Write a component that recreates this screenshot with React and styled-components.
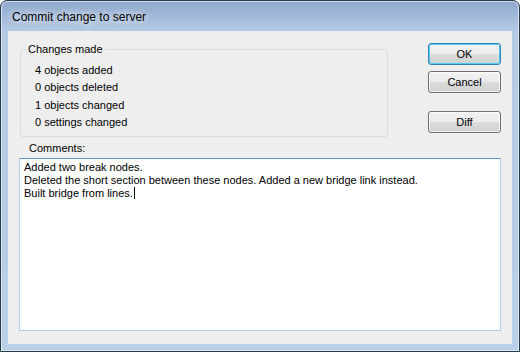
import { createGlobalStyle, styled } from 'styled-components'

const GlobalStyle = createGlobalStyle`
  html, body {
    margin: 0;
    padding: 0;
    background: #ffffff;
  }
  body {
    font-family: "Liberation Sans", Arial, sans-serif;
    font-size: 11px;
    color: #000;
  }
`

const changes = [
  '4 objects added',
  '0 objects deleted',
  '1 objects changed',
  '0 settings changed',
]

const comment = [
  'Added two break nodes.',
  'Deleted the short section between these nodes. Added a new bridge link instead.',
  'Built bridge from lines.',
]

const App = () => {
  return (
    <>
      <GlobalStyle />
      <Window>
        <TitleBar>Commit change to server</TitleBar>
        <Client>
          <TopRow>
            <LeftCol>
              <GroupBox>
                <Legend>Changes made</Legend>
                {changes.map((c) => (
                  <Item key={c}>{c}</Item>
                ))}
              </GroupBox>
              <Label>Comments:</Label>
            </LeftCol>
            <Buttons>
              <Button $default>OK</Button>
              <Button>Cancel</Button>
              <Button $gap>Diff</Button>
            </Buttons>
          </TopRow>
          <TextBox>
            {comment.map((line, i) => (
              <Line key={i}>
                {line}
                {i === comment.length - 1 && <Caret />}
              </Line>
            ))}
          </TextBox>
        </Client>
      </Window>
    </>
  )
}
export default App

const Window = styled.div`
  width: 520px;
  height: 352px;
  box-sizing: border-box;
  border: 1px solid #2e3946;
  border-radius: 7px 7px 0 0;
  box-shadow: inset 0 0 0 1px rgba(215, 240, 252, 0.85);
  background: linear-gradient(to bottom, #8fa8cd 0px, #a4bcdb 18px, #b4cbe5 30px, #b9d0e9 100%);
  padding: 0 7px 7px 7px;
  display: flex;
  flex-direction: column;
`

const TitleBar = styled.div`
  height: 29px;
  display: flex;
  align-items: center;
  padding-left: 4px;
  padding-top: 1px;
  font-size: 12px;
  color: #000;
  text-shadow: 0 0 6px rgba(255, 255, 255, 0.9), 0 0 10px rgba(255, 255, 255, 0.6);
`

const Client = styled.div`
  flex: 1;
  background: #eeeeee;
  padding: 12px 11px 13px 11px;
  display: flex;
  flex-direction: column;
  min-height: 0;
`

const TopRow = styled.div`
  display: flex;
  gap: 40px;
`

const LeftCol = styled.div`
  flex: 1;
  display: flex;
  flex-direction: column;
`

const GroupBox = styled.fieldset`
  margin: 0 0 0 1px;
  padding: 6px 8px 4px 14px;
  border: 1px solid #d5dde3;
  border-radius: 3px;
  min-width: 0;
`

const Legend = styled.legend`
  padding: 0 2px;
  margin-left: -9px;
  line-height: 13px;
`

const Item = styled.div`
  line-height: 17.4px;
  white-space: nowrap;
`

const Label = styled.div`
  margin: 5px 0 0 10px;
  line-height: 13px;
`

const Buttons = styled.div`
  width: 73px;
  display: flex;
  flex-direction: column;
  gap: 6px;
`

const Button = styled.button`
  width: 73px;
  height: 22px;
  margin-top: ${(p) => (p.$gap ? '12px' : '0')};
  padding: 0;
  font-family: "Liberation Sans", Arial, sans-serif;
  font-size: 11px;
  color: #000;
  border-radius: 3px;
  border: 1px solid ${(p) => (p.$default ? '#3c7fb1' : '#707070')};
  background: linear-gradient(to bottom, #f2f2f2 0%, #ebebeb 50%, #dddddd 51%, #cfcfcf 100%);
  box-shadow: inset 0 0 0 1px ${(p) => (p.$default ? '#48d0f8' : 'rgba(255,255,255,0.7)')};
`

const TextBox = styled.div`
  flex: 1;
  margin-top: 3px;
  background: #ffffff;
  border: 1px solid #b5cfe7;
  border-top-color: #5b9bd5;
  padding: 2px 4px;
  min-height: 0;
`

const Line = styled.div`
  line-height: 13.3px;
  white-space: nowrap;
`

const Caret = styled.span`
  display: inline-block;
  width: 1px;
  height: 12px;
  background: #000;
  vertical-align: -2px;
  margin-left: 1px;
`
